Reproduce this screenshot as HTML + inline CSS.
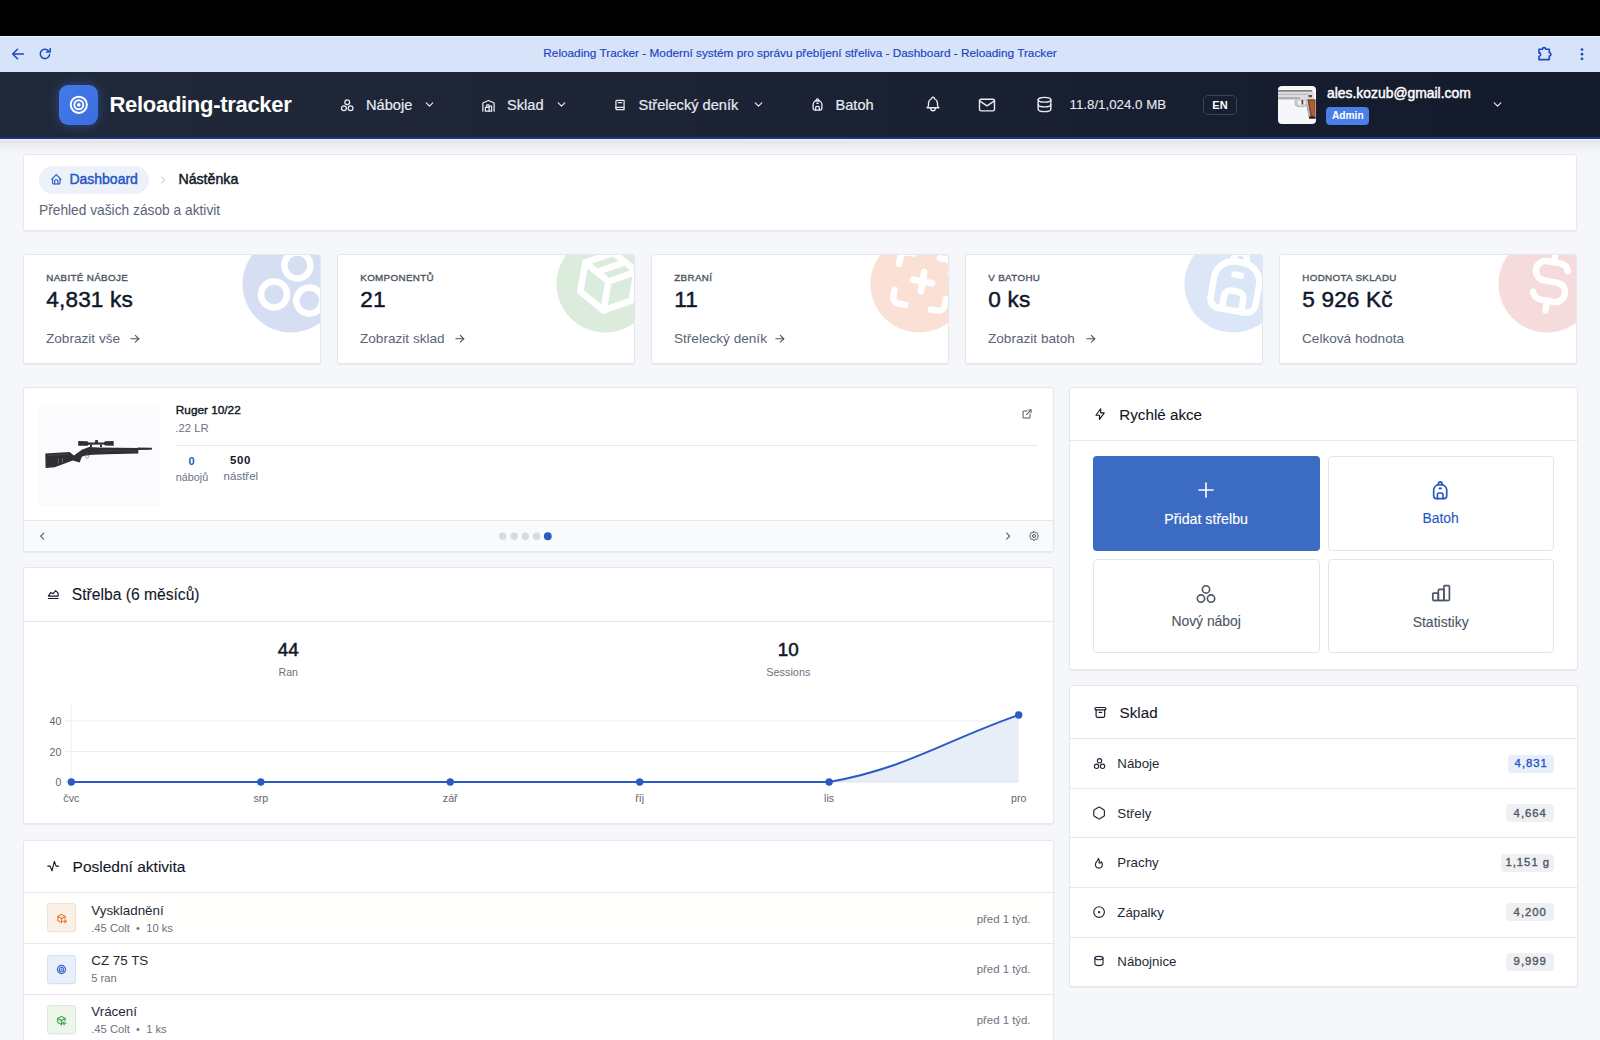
<!DOCTYPE html>
<html><head><meta charset="utf-8">
<style>
*{box-sizing:border-box;margin:0;padding:0}
html,body{width:1600px;height:1040px;overflow:hidden}
body{font-family:"Liberation Sans",sans-serif;background:#f6f7fb;position:relative;color:#111827}
.a{position:absolute}
.t{white-space:nowrap;line-height:1}
.sb{-webkit-text-stroke:0.35px currentColor}
.md{-webkit-text-stroke:0.2px currentColor}
</style></head>
<body>
<div class="a" style="left:0.00px;top:0.00px;width:1600.00px;height:36.00px;background:#000"></div>
<div class="a" style="left:0.00px;top:36.00px;width:1600.00px;height:36.00px;background:#d7e3f8"></div>
<div class="a" style="left:0.00px;top:36.00px;width:1600.00px;height:1.00px;background:#eef3fc"></div>
<div class="a t" style="left:0.00px;top:47.67px;font-size:11.80px;color:#1a42c2;width:1600.00px;text-align:center;-webkit-text-stroke:0.15px #1a42c2;">Reloading Tracker - Moderní systém pro správu přebíjení střeliva - Dashboard - Reloading Tracker</div>
<svg class="a" style="left:11px;top:47px" width="14" height="14" viewBox="0 0 14 14"><path d="M12.5 7H2M6.5 2.2L1.7 7l4.8 4.8" fill="none" stroke="#1c47c6" stroke-width="1.5" stroke-linecap="round" stroke-linejoin="round"/></svg>
<svg class="a" style="left:38px;top:47px" width="14" height="14" viewBox="0 0 14 14"><path d="M11.6 7.6A4.7 4.7 0 1 1 10.3 3.6" fill="none" stroke="#1c47c6" stroke-width="1.5" stroke-linecap="round"/><path d="M12.2 1.5v3.6H8.6" fill="none" stroke="#1c47c6" stroke-width="1.5" stroke-linecap="round" stroke-linejoin="round"/></svg>
<svg class="a" style="left:1537px;top:45px" width="17" height="17" viewBox="0 0 17 17"><path d="M2 4.2h3.5a1.6 1.6 0 0 1 3.2 0h3.6v3.6a1.6 1.6 0 0 1 0 3.2v3.6H2v-3.4a1.6 1.6 0 0 0 0-3.3z" fill="none" stroke="#1c47c6" stroke-width="1.6" stroke-linejoin="round"/></svg>
<svg class="a" style="left:1579px;top:47px" width="6" height="14" viewBox="0 0 6 14"><circle cx="3" cy="2.5" r="1.35" fill="#1c47c6"/><circle cx="3" cy="7.2" r="1.35" fill="#1c47c6"/><circle cx="3" cy="11.8" r="1.35" fill="#1c47c6"/></svg>
<div class="a" style="left:0.00px;top:72.00px;width:1600.00px;height:65.00px;background:linear-gradient(90deg,#202939 0%,#1c2335 45%,#131a2c 100%)"></div>
<div class="a" style="left:0.00px;top:137.00px;width:1600.00px;height:2.00px;background:#1f3577"></div>
<div class="a" style="left:0.00px;top:139.00px;width:1600.00px;height:15.00px;background:linear-gradient(#f4f5f8 0px,#e3e4e9 2px,#eceef2 6px,#f6f7fb 15px)"></div>
<div class="a" style="left:59.00px;top:85.00px;width:39.00px;height:39.50px;border-radius:9px;background:linear-gradient(135deg,#4479ea,#3b6fe0);box-shadow:0 0 12px rgba(70,120,235,.45)"></div>
<svg class="a" style="left:67.95px;top:93.80px" width="21.60" height="21.60" viewBox="0 0 24 24" fill="none" stroke="#fff" stroke-width="2.20" stroke-linecap="round" stroke-linejoin="round"><path d="M12 12m-1 0a1 1 0 1 0 2 0a1 1 0 1 0 -2 0"/><path d="M12 12m-5 0a5 5 0 1 0 10 0a5 5 0 1 0 -10 0"/><path d="M12 12m-9 0a9 9 0 1 0 18 0a9 9 0 1 0 -18 0"/></svg>
<div class="a t" style="left:109.50px;top:94.05px;font-size:22.00px;color:#fff;font-weight:bold;letter-spacing:-0.3px;">Reloading-tracker</div>
<svg class="a" style="left:339.75px;top:97.50px" width="14.50" height="14.50" viewBox="0 0 24 24" fill="none" stroke="#e8ebf2" stroke-width="2.10" stroke-linecap="round" stroke-linejoin="round"><path d="M12 7m-4 0a4 4 0 1 0 8 0a4 4 0 1 0 -8 0"/><path d="M6.5 17m-4 0a4 4 0 1 0 8 0a4 4 0 1 0 -8 0"/><path d="M17.5 17m-4 0a4 4 0 1 0 8 0a4 4 0 1 0 -8 0"/></svg>
<div class="a t" style="left:366.00px;top:97.79px;font-size:14.60px;color:#e8ebf2;-webkit-text-stroke:0.2px #e8ebf2;">Náboje</div>
<svg class="a" style="left:423.30px;top:98.00px" width="13.00" height="13.00" viewBox="0 0 24 24" fill="none" stroke="#e8ebf2" stroke-width="2.20" stroke-linecap="round" stroke-linejoin="round"><path d="M6 9l6 6l6 -6"/></svg>
<svg class="a" style="left:480.75px;top:97.50px" width="15.00" height="15.00" viewBox="0 0 24 24" fill="none" stroke="#e8ebf2" stroke-width="2.00" stroke-linecap="round" stroke-linejoin="round"><path d="M3 21v-13l9 -4l9 4v13"/><path d="M13 13h4v8h-10v-6h6"/><path d="M13 21v-9a1 1 0 0 0 -1 -1h-2a1 1 0 0 0 -1 1v3"/></svg>
<div class="a t" style="left:507.00px;top:97.79px;font-size:14.60px;color:#e8ebf2;-webkit-text-stroke:0.2px #e8ebf2;">Sklad</div>
<svg class="a" style="left:554.80px;top:98.00px" width="13.00" height="13.00" viewBox="0 0 24 24" fill="none" stroke="#e8ebf2" stroke-width="2.20" stroke-linecap="round" stroke-linejoin="round"><path d="M6 9l6 6l6 -6"/></svg>
<svg class="a" style="left:613.00px;top:98.15px" width="14.00" height="14.00" viewBox="0 0 24 24" fill="none" stroke="#e8ebf2" stroke-width="2.10" stroke-linecap="round" stroke-linejoin="round"><path d="M19 4v16h-12a2 2 0 0 1 -2 -2v-12a2 2 0 0 1 2 -2h12z"/><path d="M19 16h-12a2 2 0 0 0 -2 2"/><path d="M9 8h6"/></svg>
<div class="a t" style="left:638.50px;top:97.79px;font-size:14.60px;color:#e8ebf2;-webkit-text-stroke:0.2px #e8ebf2;">Střelecký deník</div>
<svg class="a" style="left:752.00px;top:98.00px" width="13.00" height="13.00" viewBox="0 0 24 24" fill="none" stroke="#e8ebf2" stroke-width="2.20" stroke-linecap="round" stroke-linejoin="round"><path d="M6 9l6 6l6 -6"/></svg>
<svg class="a" style="left:809.70px;top:97.00px" width="15.00" height="15.00" viewBox="0 0 24 24" fill="none" stroke="#e8ebf2" stroke-width="2.10" stroke-linecap="round" stroke-linejoin="round"><path d="M5 18v-6a6 6 0 0 1 6 -6h2a6 6 0 0 1 6 6v6a3 3 0 0 1 -3 3h-8a3 3 0 0 1 -3 -3z"/><path d="M10 6v-1a2 2 0 1 1 4 0v1"/><path d="M9 21v-4a2 2 0 0 1 2 -2h2a2 2 0 0 1 2 2v4"/><path d="M11 10h2"/></svg>
<div class="a t" style="left:835.50px;top:97.79px;font-size:14.60px;color:#e8ebf2;-webkit-text-stroke:0.2px #e8ebf2;">Batoh</div>
<svg class="a" style="left:923.75px;top:95.45px" width="18.00" height="18.00" viewBox="0 0 24 24" fill="none" stroke="#e8ebf2" stroke-width="1.80" stroke-linecap="round" stroke-linejoin="round"><path d="M10 5a2 2 0 1 1 4 0a7 7 0 0 1 4 6v3a4 4 0 0 0 2 3h-16a4 4 0 0 0 2 -3v-3a7 7 0 0 1 4 -6"/><path d="M9 17v1a3 3 0 0 0 6 0v-1"/></svg>
<svg class="a" style="left:976.50px;top:94.50px" width="20.00" height="20.00" viewBox="0 0 24 24" fill="none" stroke="#e8ebf2" stroke-width="1.70" stroke-linecap="round" stroke-linejoin="round"><path d="M3 7a2 2 0 0 1 2 -2h14a2 2 0 0 1 2 2v10a2 2 0 0 1 -2 2h-14a2 2 0 0 1 -2 -2v-10z"/><path d="M3 7l9 6l9 -6"/></svg>
<svg class="a" style="left:1035.00px;top:95.20px" width="19.00" height="19.00" viewBox="0 0 24 24" fill="none" stroke="#e8ebf2" stroke-width="1.80" stroke-linecap="round" stroke-linejoin="round"><path d="M12 6m-8 0a8 3 0 1 0 16 0a8 3 0 1 0 -16 0"/><path d="M4 6v6a8 3 0 0 0 16 0v-6"/><path d="M4 12v6a8 3 0 0 0 16 0v-6"/></svg>
<div class="a t" style="left:1069.50px;top:98.19px;font-size:13.30px;color:#e8ebf2;-webkit-text-stroke:0.1px #e8ebf2;">11.8/1,024.0 MB</div>
<div class="a" style="left:1203.00px;top:94.50px;width:34.00px;height:20.50px;border:1.5px solid #3b4254;border-radius:5px"></div>
<div class="a t" style="left:1203.00px;top:99.55px;font-size:11.00px;color:#fff;font-weight:bold;width:34.00px;text-align:center;">EN</div>
<div class="a" style="left:1278px;top:86px;width:37.5px;height:37.5px;border-radius:4px;background:#f6f7f9;overflow:hidden">
 <svg width="38" height="38" viewBox="0 0 38 38"><path d="M0 5.2h34.5l1.5 1.5v7.3H0z" fill="#dcdcde"/><path d="M0 4.2h34.2v1.3H0z" fill="#5a5a5c"/><path d="M0 7.8h31v1.1H0z" fill="#bdbdc0"/><path d="M0 11.3h22v1.6H0z" fill="#a9a9ac"/><path d="M30.5 9h3.5v2.2h-3.5z" fill="#555"/><path d="M16.5 13.5h13v4.5c-1 2.2-3 3.2-5.2 3.2h-3.3c-2.5 0-4.5-1.2-4.5-3.5z" fill="#c4c4c7"/><path d="M19.5 14.5h8v3c-.8 1.3-2 2-3.5 2h-1.5c-1.8 0-3-.8-3-2.2z" fill="#eeeeef"/><path d="M23.6 14h1.6v4.5h-1.6z" fill="#3d3d40"/><path d="M29.3 13.2L37.5 13.2L37.5 30.6L32.3 31.2z" fill="#8a4824"/><path d="M31.2 15l4.6-.2 1 14.6-2.8.4z" fill="#a9603a"/><path d="M28 18.4l1.9-.3 2.6 12.4-1.9.3z" fill="#a8b2c0"/><path d="M30.6 30.6h7v2.2h-6.3z" fill="#1f1f22"/></svg>
</div>
<div class="a t" style="left:1327.00px;top:87.28px;font-size:13.90px;color:#fff;-webkit-text-stroke:0.45px #fff;">ales.kozub@gmail.com</div>
<div class="a" style="left:1326.30px;top:107.00px;width:43.00px;height:18.00px;border-radius:4px;background:#4a7fe8"></div>
<div class="a t" style="left:1326.30px;top:110.83px;font-size:10.20px;color:#fff;font-weight:bold;width:43.00px;text-align:center;">Admin</div>
<svg class="a" style="left:1490.75px;top:98.20px" width="13.00" height="13.00" viewBox="0 0 24 24" fill="none" stroke="#e8ebf2" stroke-width="2.20" stroke-linecap="round" stroke-linejoin="round"><path d="M6 9l6 6l6 -6"/></svg>
<div class="a" style="left:23.00px;top:154.00px;width:1554.00px;height:77.00px;background:#fff;border:1px solid #e4e7ec;border-radius:3px;box-shadow:0 1px 1.5px rgba(17,24,39,.06);"></div>
<div class="a" style="left:38.50px;top:165.50px;width:110.00px;height:28.20px;border-radius:14px;background:#edf1fa"></div>
<svg class="a" style="left:49.85px;top:173.30px" width="12.60" height="12.60" viewBox="0 0 24 24" fill="none" stroke="#2456c4" stroke-width="2.10" stroke-linecap="round" stroke-linejoin="round"><path d="M5 12l-2 0l9 -9l9 9l-2 0"/><path d="M5 12v7a2 2 0 0 0 2 2h10a2 2 0 0 0 2 -2v-7"/><path d="M9 21v-6a2 2 0 0 1 2 -2h2a2 2 0 0 1 2 2v6"/></svg>
<div class="a t" style="left:69.40px;top:172.10px;font-size:14.00px;color:#2456c4;-webkit-text-stroke:0.45px #2456c4;">Dashboard</div>
<svg class="a" style="left:157.20px;top:173.95px" width="12.30" height="12.30" viewBox="0 0 24 24" fill="none" stroke="#cdd2da" stroke-width="2.20" stroke-linecap="round" stroke-linejoin="round"><path d="M9 6l6 6l-6 6"/></svg>
<div class="a t" style="left:178.40px;top:171.93px;font-size:14.20px;color:#111827;-webkit-text-stroke:0.45px #111827;">Nástěnka</div>
<div class="a t" style="left:39.00px;top:204.01px;font-size:13.75px;color:#5b6475;">Přehled vašich zásob a aktivit</div>
<div class="a" style="left:23px;top:254px;width:298px;height:110px;background:#fff;border:1px solid #e4e7ec;border-radius:3px;box-shadow:0 1px 1.5px rgba(17,24,39,.06);overflow:hidden"><svg class="a" style="left:-1px;top:-1px" width="298" height="108" viewBox="0 0 298 108"><circle cx="268" cy="30" r="48.5" fill="#d5def2"/><g transform="translate(271.5,27.5) rotate(10) scale(3.26) translate(-12,-12)" fill="none" stroke="#fff" stroke-width="2" stroke-linecap="round" stroke-linejoin="round"><path d="M12 7m-4 0a4 4 0 1 0 8 0a4 4 0 1 0 -8 0"/><path d="M6.5 17m-4 0a4 4 0 1 0 8 0a4 4 0 1 0 -8 0"/><path d="M17.5 17m-4 0a4 4 0 1 0 8 0a4 4 0 1 0 -8 0"/></g></svg></div>
<div class="a t" style="left:46.25px;top:272.87px;font-size:9.80px;color:#4b5563;letter-spacing:0.35px;-webkit-text-stroke:0.35px #4b5563;">NABITÉ NÁBOJE</div>
<div class="a t" style="left:46.30px;top:289.39px;font-size:22.60px;color:#0f172a;letter-spacing:0.15px;-webkit-text-stroke:0.45px #0f172a;">4,831 ks</div>
<div class="a t" style="left:46.00px;top:332.19px;font-size:13.60px;color:#5b6476;">Zobrazit vše</div>
<svg class="a" style="left:127.75px;top:331.85px" width="13.50" height="13.50" viewBox="0 0 24 24" fill="none" stroke="#4b5565" stroke-width="1.90" stroke-linecap="round" stroke-linejoin="round"><path d="M5 12l14 0"/><path d="M13 18l6 -6"/><path d="M13 6l6 6"/></svg>
<div class="a" style="left:337px;top:254px;width:298px;height:110px;background:#fff;border:1px solid #e4e7ec;border-radius:3px;box-shadow:0 1px 1.5px rgba(17,24,39,.06);overflow:hidden"><svg class="a" style="left:-1px;top:-1px" width="298" height="108" viewBox="0 0 298 108"><circle cx="268" cy="30" r="48.5" fill="#dcecdc"/><g transform="translate(271.5,27.5) rotate(10) scale(3.26) translate(-12,-12)" fill="none" stroke="#fff" stroke-width="2" stroke-linecap="round" stroke-linejoin="round"><path d="M12 3l8 4.5l0 9l-8 4.5l-8 -4.5l0 -9l8 -4.5"/><path d="M12 12l8 -4.5"/><path d="M12 12l0 9"/><path d="M12 12l-8 -4.5"/><path d="M16 5.25l-8 4.5"/></g></svg></div>
<div class="a t" style="left:360.25px;top:272.87px;font-size:9.80px;color:#4b5563;letter-spacing:0.35px;-webkit-text-stroke:0.35px #4b5563;">KOMPONENTŮ</div>
<div class="a t" style="left:360.30px;top:289.39px;font-size:22.60px;color:#0f172a;letter-spacing:0.15px;-webkit-text-stroke:0.45px #0f172a;">21</div>
<div class="a t" style="left:360.00px;top:332.19px;font-size:13.60px;color:#5b6476;">Zobrazit sklad</div>
<svg class="a" style="left:452.55px;top:331.85px" width="13.50" height="13.50" viewBox="0 0 24 24" fill="none" stroke="#4b5565" stroke-width="1.90" stroke-linecap="round" stroke-linejoin="round"><path d="M5 12l14 0"/><path d="M13 18l6 -6"/><path d="M13 6l6 6"/></svg>
<div class="a" style="left:651px;top:254px;width:298px;height:110px;background:#fff;border:1px solid #e4e7ec;border-radius:3px;box-shadow:0 1px 1.5px rgba(17,24,39,.06);overflow:hidden"><svg class="a" style="left:-1px;top:-1px" width="298" height="108" viewBox="0 0 298 108"><circle cx="268" cy="30" r="48.5" fill="#fae0d5"/><g transform="translate(271.5,27.5) rotate(10) scale(3.26) translate(-12,-12)" fill="none" stroke="#fff" stroke-width="2" stroke-linecap="round" stroke-linejoin="round"><path d="M4 8v-2a2 2 0 0 1 2 -2h2"/><path d="M4 16v2a2 2 0 0 0 2 2h2"/><path d="M16 4h2a2 2 0 0 1 2 2v2"/><path d="M16 20h2a2 2 0 0 0 2 -2v-2"/><path d="M9 12h6"/><path d="M12 9v6"/></g></svg></div>
<div class="a t" style="left:674.25px;top:272.87px;font-size:9.80px;color:#4b5563;letter-spacing:0.35px;-webkit-text-stroke:0.35px #4b5563;">ZBRANÍ</div>
<div class="a t" style="left:674.30px;top:289.39px;font-size:22.60px;color:#0f172a;letter-spacing:0.15px;-webkit-text-stroke:0.45px #0f172a;">11</div>
<div class="a t" style="left:674.00px;top:332.19px;font-size:13.60px;color:#5b6476;">Střelecký deník</div>
<svg class="a" style="left:773.25px;top:331.85px" width="13.50" height="13.50" viewBox="0 0 24 24" fill="none" stroke="#4b5565" stroke-width="1.90" stroke-linecap="round" stroke-linejoin="round"><path d="M5 12l14 0"/><path d="M13 18l6 -6"/><path d="M13 6l6 6"/></svg>
<div class="a" style="left:965px;top:254px;width:298px;height:110px;background:#fff;border:1px solid #e4e7ec;border-radius:3px;box-shadow:0 1px 1.5px rgba(17,24,39,.06);overflow:hidden"><svg class="a" style="left:-1px;top:-1px" width="298" height="108" viewBox="0 0 298 108"><circle cx="268" cy="30" r="48.5" fill="#dbe7f7"/><g transform="translate(271.5,27.5) rotate(10) scale(3.26) translate(-12,-12)" fill="none" stroke="#fff" stroke-width="2" stroke-linecap="round" stroke-linejoin="round"><path d="M5 18v-6a6 6 0 0 1 6 -6h2a6 6 0 0 1 6 6v6a3 3 0 0 1 -3 3h-8a3 3 0 0 1 -3 -3z"/><path d="M10 6v-1a2 2 0 1 1 4 0v1"/><path d="M9 21v-4a2 2 0 0 1 2 -2h2a2 2 0 0 1 2 2v4"/><path d="M11 10h2"/></g></svg></div>
<div class="a t" style="left:988.25px;top:272.87px;font-size:9.80px;color:#4b5563;letter-spacing:0.35px;-webkit-text-stroke:0.35px #4b5563;">V BATOHU</div>
<div class="a t" style="left:988.30px;top:289.39px;font-size:22.60px;color:#0f172a;letter-spacing:0.15px;-webkit-text-stroke:0.45px #0f172a;">0 ks</div>
<div class="a t" style="left:988.00px;top:332.19px;font-size:13.60px;color:#5b6476;">Zobrazit batoh</div>
<svg class="a" style="left:1083.85px;top:331.85px" width="13.50" height="13.50" viewBox="0 0 24 24" fill="none" stroke="#4b5565" stroke-width="1.90" stroke-linecap="round" stroke-linejoin="round"><path d="M5 12l14 0"/><path d="M13 18l6 -6"/><path d="M13 6l6 6"/></svg>
<div class="a" style="left:1279px;top:254px;width:298px;height:110px;background:#fff;border:1px solid #e4e7ec;border-radius:3px;box-shadow:0 1px 1.5px rgba(17,24,39,.06);overflow:hidden"><svg class="a" style="left:-1px;top:-1px" width="298" height="108" viewBox="0 0 298 108"><circle cx="268" cy="30" r="48.5" fill="#f5dbdb"/><g transform="translate(271.5,27.5) rotate(10) scale(3.26) translate(-12,-12)" fill="none" stroke="#fff" stroke-width="2" stroke-linecap="round" stroke-linejoin="round"><path d="M16.7 8a3 3 0 0 0 -2.7 -2h-4a3 3 0 0 0 0 6h4a3 3 0 0 1 0 6h-4a3 3 0 0 1 -2.7 -2"/><path d="M12 3v3m0 12v3"/></g></svg></div>
<div class="a t" style="left:1302.25px;top:272.87px;font-size:9.80px;color:#4b5563;letter-spacing:0.35px;-webkit-text-stroke:0.35px #4b5563;">HODNOTA SKLADU</div>
<div class="a t" style="left:1302.30px;top:289.39px;font-size:22.60px;color:#0f172a;letter-spacing:0.15px;-webkit-text-stroke:0.45px #0f172a;">5 926 Kč</div>
<div class="a t" style="left:1302.00px;top:332.19px;font-size:13.60px;color:#5b6476;">Celková hodnota</div>
<div class="a" style="left:23.00px;top:387.00px;width:1031.00px;height:165.00px;background:#fff;border:1px solid #e4e7ec;border-radius:3px;box-shadow:0 1px 1.5px rgba(17,24,39,.06);"></div>
<div class="a" style="left:38.70px;top:403.80px;width:121.00px;height:102.50px;background:#fbfbfd;border-radius:3px"></div>
<svg class="a" style="left:0;top:0" width="1600" height="1040" viewBox="0 0 1600 1040">
 <g fill="#2f2f33">
  <path d="M45.3 453.4L69.5 451.9L73.9 455.4L81.9 449.8L89.1 446.9L98 447.4L138.2 448.1L138.4 453.4L107 454.2L92.7 454.8L84.5 455.8L81.9 456.8L79.6 462.6L72.8 460.6L54.7 467.2L45.6 468z"/>
  <path d="M137.5 447.5L151.6 447.8Q152.6 448.7 151.6 449.8L137.5 449.9z"/>
  <path d="M78.2 441.1L87.5 441.3L88.5 442.6L95 442.6L95.3 439.9L97.8 439.9L98 442.6L104 442.6L105 441.2L113.6 441.1L113.8 445.8L105 445.6L104 444.6L88.5 444.7L87.5 445.8L78.2 445.8z"/>
  <path d="M90 444.5h2v2.6h-2zM100 444.5h2v2.6h-2z"/>
 </g>
 <path d="M48 455.5L68 454.2" stroke="#4a4a4f" stroke-width="0.8"/>
 <path d="M100 450.5L136 451" stroke="#46464b" stroke-width="0.7"/>
 <circle cx="87.2" cy="456.6" r="1.6" fill="none" stroke="#8a8a8f" stroke-width="0.8"/>
 <path d="M58.4 458.5v5M62.5 458v5" stroke="#6a6a70" stroke-width="0.9"/>
</svg>
<div class="a t" style="left:175.80px;top:405.17px;font-size:11.80px;color:#111827;-webkit-text-stroke:0.4px #111827;">Ruger 10/22</div>
<div class="a t" style="left:175.30px;top:423.00px;font-size:11.30px;color:#6b7280;">.22 LR</div>
<div class="a" style="left:175.00px;top:444.50px;width:863.00px;height:1.50px;background:#e6e8ec"></div>
<div class="a t" style="left:175.00px;top:455.75px;font-size:11.00px;color:#2456c4;font-weight:bold;width:33.00px;text-align:center;">0</div>
<div class="a t" style="left:223.50px;top:455.41px;font-size:11.40px;color:#111827;font-weight:bold;width:34.00px;text-align:center;letter-spacing:0.6px;">500</div>
<div class="a t" style="left:175.80px;top:471.52px;font-size:10.80px;color:#6b7280;">nábojů</div>
<div class="a t" style="left:223.60px;top:470.93px;font-size:11.50px;color:#6b7280;">nástřel</div>
<svg class="a" style="left:1020.95px;top:407.95px" width="12.10" height="12.10" viewBox="0 0 24 24" fill="none" stroke="#4b5563" stroke-width="2.00" stroke-linecap="round" stroke-linejoin="round"><path d="M12 6h-6a2 2 0 0 0 -2 2v10a2 2 0 0 0 2 2h10a2 2 0 0 0 2 -2v-6"/><path d="M11 13l9 -9"/><path d="M15 4h5v5"/></svg>
<div class="a" style="left:24.00px;top:520.00px;width:1029.00px;height:31.00px;background:#f9fafb;border-top:1px solid #e5e7eb"></div>
<svg class="a" style="left:35.85px;top:530.45px" width="12.30" height="12.30" viewBox="0 0 24 24" fill="none" stroke="#4b5563" stroke-width="2.00" stroke-linecap="round" stroke-linejoin="round"><path d="M15 6l-6 6l6 6"/></svg>
<svg class="a" style="left:495px;top:530px" width="60" height="12" viewBox="0 0 60 12"><circle cx="7.8" cy="6.25" r="3.7" fill="#d8dadf"/><circle cx="19.25" cy="6.25" r="3.7" fill="#d8dadf"/><circle cx="30.3" cy="6.25" r="3.7" fill="#d8dadf"/><circle cx="41.6" cy="6.25" r="3.7" fill="#d8dadf"/><circle cx="52.8" cy="6.25" r="3.9" fill="#2a5bc4"/></svg>
<svg class="a" style="left:1002.35px;top:530.45px" width="12.30" height="12.30" viewBox="0 0 24 24" fill="none" stroke="#4b5563" stroke-width="2.00" stroke-linecap="round" stroke-linejoin="round"><path d="M9 6l6 6l-6 6"/></svg>
<svg class="a" style="left:1028.45px;top:530.40px" width="12.00" height="12.00" viewBox="0 0 24 24" fill="none" stroke="#4b5563" stroke-width="2.00" stroke-linecap="round" stroke-linejoin="round"><path d="M10.325 4.317c.426 -1.756 2.924 -1.756 3.35 0a1.724 1.724 0 0 0 2.573 1.066c1.543 -.94 3.31 .826 2.37 2.37a1.724 1.724 0 0 0 1.065 2.572c1.756 .426 1.756 2.924 0 3.35a1.724 1.724 0 0 0 -1.066 2.573c.94 1.543 -.826 3.31 -2.37 2.37a1.724 1.724 0 0 0 -2.572 1.065c-.426 1.756 -2.924 1.756 -3.35 0a1.724 1.724 0 0 0 -2.573 -1.066c-1.543 .94 -3.31 -.826 -2.37 -2.37a1.724 1.724 0 0 0 -1.065 -2.572c-1.756 -.426 -1.756 -2.924 0 -3.35a1.724 1.724 0 0 0 1.066 -2.573c-.94 -1.543 .826 -3.31 2.37 -2.37c1 .608 2.296 .07 2.572 -1.065z"/><path d="M9 12a3 3 0 1 0 6 0a3 3 0 0 0 -6 0"/></svg>
<div class="a" style="left:23.00px;top:567.00px;width:1031.00px;height:257.00px;background:#fff;border:1px solid #e4e7ec;border-radius:3px;box-shadow:0 1px 1.5px rgba(17,24,39,.06);"></div>
<svg class="a" style="left:46.30px;top:587.25px" width="14.50" height="14.50" viewBox="0 0 24 24" fill="none" stroke="#111827" stroke-width="1.90" stroke-linecap="round" stroke-linejoin="round"><path d="M4 19l16 0"/><path d="M4 15l4 -6l4 2l4 -5l4 4l0 5l-16 0"/></svg>
<div class="a t" style="left:71.80px;top:586.70px;font-size:15.65px;color:#111827;-webkit-text-stroke:0.1px #111827;">Střelba (6 měsíců)</div>
<div class="a" style="left:24.00px;top:621.00px;width:1029.00px;height:1.00px;background:#e5e7eb"></div>
<div class="a t" style="left:188.30px;top:641.02px;font-size:18.80px;color:#111827;width:200.00px;text-align:center;-webkit-text-stroke:0.55px #111827;">44</div>
<div class="a t" style="left:188.30px;top:667.39px;font-size:10.60px;color:#6b7280;width:200.00px;text-align:center;">Ran</div>
<div class="a t" style="left:688.30px;top:641.02px;font-size:18.80px;color:#111827;width:200.00px;text-align:center;-webkit-text-stroke:0.55px #111827;">10</div>
<div class="a t" style="left:688.30px;top:667.13px;font-size:10.90px;color:#6b7280;width:200.00px;text-align:center;">Sessions</div>
<svg class="a" style="left:0;top:0" width="1600" height="1040" viewBox="0 0 1600 1040">
 <g stroke="#eceef1" stroke-width="1"><path d="M65 720.8H1018.5M65 751.5H1018.5"/><path d="M71.3 704.5V782"/></g>
 <path d="M829 782C907.1 768.1 942.7 741.5 1018.7 715L1018.7 782z" fill="#e8eef8"/>
 <path d="M65 782H1018.5" stroke="#e0e3e8" stroke-width="1"/>
 <path d="M71.3 782H829C907.1 768.1 942.7 741.5 1018.7 715" fill="none" stroke="#2a5bc4" stroke-width="2"/>
 <g fill="#2a5bc4"><circle cx="71.3" cy="782" r="3.7"/><circle cx="260.8" cy="782" r="3.7"/><circle cx="450.2" cy="782" r="3.7"/><circle cx="639.7" cy="782" r="3.7"/><circle cx="829.1" cy="782" r="3.7"/><circle cx="1018.7" cy="715" r="3.7"/></g>
 <g font-family="Liberation Sans" font-size="10.6" fill="#666" text-anchor="end"><text x="61.3" y="724.9">40</text><text x="61.3" y="755.6">20</text><text x="61.3" y="785.5">0</text></g>
 <g font-family="Liberation Sans" font-size="10.6" fill="#666" text-anchor="middle"><text x="71.3" y="802">čvc</text><text x="260.8" y="802">srp</text><text x="450.2" y="802">zář</text><text x="639.7" y="802">říj</text><text x="829.1" y="802">lis</text><text x="1018.7" y="802">pro</text></g>
</svg>
<div class="a" style="left:23.00px;top:840.00px;width:1031.00px;height:221.00px;background:#fff;border:1px solid #e4e7ec;border-radius:3px;box-shadow:0 1px 1.5px rgba(17,24,39,.06);"></div>
<svg class="a" style="left:46.30px;top:858.75px" width="14.30" height="14.30" viewBox="0 0 24 24" fill="none" stroke="#111827" stroke-width="1.90" stroke-linecap="round" stroke-linejoin="round"><path d="M3 12h4l3 8l4 -16l3 8h4"/></svg>
<div class="a t" style="left:72.60px;top:858.73px;font-size:15.50px;color:#111827;-webkit-text-stroke:0.1px #111827;">Poslední aktivita</div>
<div class="a" style="left:24.00px;top:892.00px;width:1029.00px;height:1.00px;background:#e5e7eb"></div>
<div class="a" style="left:24.00px;top:893.00px;width:1029.00px;height:50.00px;background:#fffffd"></div>
<div class="a" style="left:24.00px;top:943.00px;width:1029.00px;height:1.00px;background:#e5e7eb"></div>
<div class="a" style="left:24.00px;top:994.00px;width:1029.00px;height:1.00px;background:#e5e7eb"></div>
<div class="a" style="left:46.50px;top:903.40px;width:29.00px;height:29.00px;border-radius:3px;background:#fcf1e7;border:1px solid #f1e1d1;box-shadow:0 1px 1px rgba(0,0,0,.04)"></div>
<svg class="a" style="left:55.50px;top:913.30px" width="11.00" height="11.00" viewBox="0 0 24 24" fill="none" stroke="#e8742a" stroke-width="2.40" stroke-linecap="round" stroke-linejoin="round"><path d="M12 21l-8 -4.5v-9l8 -4.5l8 4.5v4.5"/><path d="M12 12l8 -4.5"/><path d="M12 12v9"/><path d="M12 12l-8 -4.5"/><path d="M15 18h7"/><path d="M19 15l3 3l-3 3"/></svg>
<div class="a t" style="left:91.25px;top:903.61px;font-size:13.40px;color:#1f2937;">Vyskladnění</div>
<div class="a t" style="left:91.25px;top:922.88px;font-size:11.20px;color:#6b7280;">.45 Colt&nbsp; •&nbsp; 10 ks</div>
<div class="a t" style="left:880.50px;top:913.61px;font-size:11.40px;color:#6b7280;width:150.00px;text-align:right;">před 1 týd.</div>
<div class="a" style="left:46.50px;top:954.50px;width:29.00px;height:29.00px;border-radius:3px;background:#e9f0fb;border:1px solid #d6e0f0;box-shadow:0 1px 1px rgba(0,0,0,.04)"></div>
<svg class="a" style="left:55.50px;top:964.40px" width="11.00" height="11.00" viewBox="0 0 24 24" fill="none" stroke="#3a66c4" stroke-width="2.40" stroke-linecap="round" stroke-linejoin="round"><path d="M12 12m-1 0a1 1 0 1 0 2 0a1 1 0 1 0 -2 0"/><path d="M12 12m-5 0a5 5 0 1 0 10 0a5 5 0 1 0 -10 0"/><path d="M12 12m-9 0a9 9 0 1 0 18 0a9 9 0 1 0 -18 0"/></svg>
<div class="a t" style="left:91.25px;top:954.21px;font-size:13.40px;color:#1f2937;">CZ 75 TS</div>
<div class="a t" style="left:91.25px;top:973.48px;font-size:11.20px;color:#6b7280;">5 ran</div>
<div class="a t" style="left:880.50px;top:964.21px;font-size:11.40px;color:#6b7280;width:150.00px;text-align:right;">před 1 týd.</div>
<div class="a" style="left:46.50px;top:1005.00px;width:29.00px;height:29.00px;border-radius:3px;background:#edf7ec;border:1px solid #d9eAd6;box-shadow:0 1px 1px rgba(0,0,0,.04)"></div>
<svg class="a" style="left:55.50px;top:1014.90px" width="11.00" height="11.00" viewBox="0 0 24 24" fill="none" stroke="#3aa241" stroke-width="2.40" stroke-linecap="round" stroke-linejoin="round"><path d="M12 21l-8 -4.5v-9l8 -4.5l8 4.5v4.5"/><path d="M12 12l8 -4.5"/><path d="M12 12v9"/><path d="M12 12l-8 -4.5"/><path d="M22 18h-7"/><path d="M18 15l-3 3l3 3"/></svg>
<div class="a t" style="left:91.25px;top:1004.86px;font-size:13.40px;color:#1f2937;">Vrácení</div>
<div class="a t" style="left:91.25px;top:1023.98px;font-size:11.20px;color:#6b7280;">.45 Colt&nbsp; •&nbsp; 1 ks</div>
<div class="a t" style="left:880.50px;top:1014.86px;font-size:11.40px;color:#6b7280;width:150.00px;text-align:right;">před 1 týd.</div>
<div class="a" style="left:1069.00px;top:387.00px;width:509.00px;height:283.00px;background:#fff;border:1px solid #e4e7ec;border-radius:3px;box-shadow:0 1px 1.5px rgba(17,24,39,.06);"></div>
<svg class="a" style="left:1093.15px;top:406.60px" width="14.20" height="14.20" viewBox="0 0 24 24" fill="none" stroke="#111827" stroke-width="1.90" stroke-linecap="round" stroke-linejoin="round"><path d="M13 3l0 7l6 0l-8 11l0 -7l-6 0l8 -11"/></svg>
<div class="a t" style="left:1119.30px;top:406.68px;font-size:15.20px;color:#111827;-webkit-text-stroke:0.1px #111827;">Rychlé akce</div>
<div class="a" style="left:1070.00px;top:440.00px;width:507.00px;height:1.00px;background:#e5e7eb"></div>
<div class="a" style="left:1092.50px;top:456.00px;width:227.30px;height:95.20px;border-radius:4px;background:#3b6bc2"></div>
<svg class="a" style="left:1194.30px;top:478.30px" width="24.00" height="24.00" viewBox="0 0 24 24" fill="none" stroke="#fff" stroke-width="1.60" stroke-linecap="round" stroke-linejoin="round"><path d="M12 5l0 14"/><path d="M5 12l14 0"/></svg>
<div class="a t" style="left:1092.50px;top:511.93px;font-size:14.20px;color:#fff;width:227.30px;text-align:center;-webkit-text-stroke:0.15px #fff;">Přidat střelbu</div>
<div class="a" style="left:1327.50px;top:456.30px;width:226.30px;height:94.40px;border-radius:4px;border:1px solid #e3e5ea;background:#fff"></div>
<svg class="a" style="left:1429.30px;top:479.30px" width="22.40" height="22.40" viewBox="0 0 24 24" fill="none" stroke="#2456c4" stroke-width="1.80" stroke-linecap="round" stroke-linejoin="round"><path d="M5 18v-6a6 6 0 0 1 6 -6h2a6 6 0 0 1 6 6v6a3 3 0 0 1 -3 3h-8a3 3 0 0 1 -3 -3z"/><path d="M10 6v-1a2 2 0 1 1 4 0v1"/><path d="M9 21v-4a2 2 0 0 1 2 -2h2a2 2 0 0 1 2 2v4"/><path d="M11 10h2"/></svg>
<div class="a t" style="left:1327.50px;top:512.18px;font-size:13.90px;color:#2456c4;width:226.30px;text-align:center;-webkit-text-stroke:0.1px #2456c4;">Batoh</div>
<div class="a" style="left:1092.50px;top:559.10px;width:227.30px;height:94.20px;border-radius:4px;border:1px solid #e3e5ea;background:#fff"></div>
<svg class="a" style="left:1195.30px;top:582.50px" width="22.00" height="22.00" viewBox="0 0 24 24" fill="none" stroke="#4b5563" stroke-width="1.80" stroke-linecap="round" stroke-linejoin="round"><path d="M12 7m-4 0a4 4 0 1 0 8 0a4 4 0 1 0 -8 0"/><path d="M6.5 17m-4 0a4 4 0 1 0 8 0a4 4 0 1 0 -8 0"/><path d="M17.5 17m-4 0a4 4 0 1 0 8 0a4 4 0 1 0 -8 0"/></svg>
<div class="a t" style="left:1092.50px;top:615.18px;font-size:13.90px;color:#4b5563;width:227.30px;text-align:center;-webkit-text-stroke:0.1px #4b5563;">Nový náboj</div>
<div class="a" style="left:1327.50px;top:559.10px;width:226.30px;height:94.20px;border-radius:4px;border:1px solid #e3e5ea;background:#fff"></div>
<svg class="a" style="left:1429.55px;top:582.05px" width="22.20" height="22.20" viewBox="0 0 24 24" fill="none" stroke="#4b5563" stroke-width="1.80" stroke-linecap="round" stroke-linejoin="round"><path d="M3 13a1 1 0 0 1 1 -1h4a1 1 0 0 1 1 1v6a1 1 0 0 1 -1 1h-4a1 1 0 0 1 -1 -1z"/><path d="M9 9a1 1 0 0 1 1 -1h4a1 1 0 0 1 1 1v10a1 1 0 0 1 -1 1h-4a1 1 0 0 1 -1 -1z"/><path d="M15 5a1 1 0 0 1 1 -1h4a1 1 0 0 1 1 1v14a1 1 0 0 1 -1 1h-4a1 1 0 0 1 -1 -1z"/><path d="M4 20h14"/></svg>
<div class="a t" style="left:1327.50px;top:615.10px;font-size:14.00px;color:#4b5563;width:226.30px;text-align:center;-webkit-text-stroke:0.1px #4b5563;">Statistiky</div>
<div class="a" style="left:1069.00px;top:685.00px;width:509.00px;height:302.00px;background:#fff;border:1px solid #e4e7ec;border-radius:3px;box-shadow:0 1px 1.5px rgba(17,24,39,.06);"></div>
<svg class="a" style="left:1092.60px;top:704.60px" width="14.80" height="14.80" viewBox="0 0 24 24" fill="none" stroke="#111827" stroke-width="1.90" stroke-linecap="round" stroke-linejoin="round"><path d="M3 4m0 2a2 2 0 0 1 2 -2h14a2 2 0 0 1 2 2v0a2 2 0 0 1 -2 2h-14a2 2 0 0 1 -2 -2z"/><path d="M5 8v10a2 2 0 0 0 2 2h10a2 2 0 0 0 2 -2v-10"/><path d="M10 12l4 0"/></svg>
<div class="a t" style="left:1119.60px;top:704.78px;font-size:15.20px;color:#111827;-webkit-text-stroke:0.1px #111827;">Sklad</div>
<div class="a" style="left:1070.00px;top:738.00px;width:507.00px;height:1.00px;background:#e5e7eb"></div>
<svg class="a" style="left:1092.70px;top:756.80px" width="13.10" height="13.10" viewBox="0 0 24 24" fill="none" stroke="#1f2937" stroke-width="2.00" stroke-linecap="round" stroke-linejoin="round"><path d="M12 7m-4 0a4 4 0 1 0 8 0a4 4 0 1 0 -8 0"/><path d="M6.5 17m-4 0a4 4 0 1 0 8 0a4 4 0 1 0 -8 0"/><path d="M17.5 17m-4 0a4 4 0 1 0 8 0a4 4 0 1 0 -8 0"/></svg>
<div class="a t" style="left:1117.30px;top:757.20px;font-size:13.30px;color:#1f2937;">Náboje</div>
<div class="a" style="left:1507.75px;top:754.50px;width:46.00px;height:18.00px;border-radius:4px;background:#e8eefa"></div>
<div class="a t" style="left:1508.25px;top:758.39px;font-size:11.30px;color:#2456c4;width:46.00px;text-align:center;letter-spacing:1.0px;-webkit-text-stroke:0.35px currentColor;">4,831</div>
<div class="a" style="left:1070.00px;top:788.00px;width:507.00px;height:1.00px;background:#e5e7eb"></div>
<svg class="a" style="left:1091.50px;top:805.70px" width="14.20" height="14.20" viewBox="0 0 24 24" fill="none" stroke="#1f2937" stroke-width="2.00" stroke-linecap="round" stroke-linejoin="round"><path d="M19.875 6.27c.7 .398 1.13 1.143 1.125 1.948v7.284c0 .809 -.443 1.555 -1.158 1.948l-6.75 4.27a2.269 2.269 0 0 1 -2.184 0l-6.75 -4.27a2.225 2.225 0 0 1 -1.158 -1.948v-7.285c0 -.809 .443 -1.554 1.158 -1.947l6.75 -3.98a2.33 2.33 0 0 1 2.25 0l6.75 3.98h-.033z"/></svg>
<div class="a t" style="left:1117.30px;top:806.70px;font-size:13.30px;color:#1f2937;">Střely</div>
<div class="a" style="left:1505.75px;top:804.00px;width:48.00px;height:18.00px;border-radius:4px;background:#eff0f2"></div>
<div class="a t" style="left:1506.25px;top:807.89px;font-size:11.30px;color:#4b5563;width:48.00px;text-align:center;letter-spacing:1.0px;-webkit-text-stroke:0.35px currentColor;">4,664</div>
<div class="a" style="left:1070.00px;top:837.00px;width:507.00px;height:1.00px;background:#e5e7eb"></div>
<svg class="a" style="left:1092.10px;top:855.60px" width="13.80" height="13.80" viewBox="0 0 24 24" fill="none" stroke="#1f2937" stroke-width="2.00" stroke-linecap="round" stroke-linejoin="round"><path d="M12 12c2 -2.96 0 -7 -1 -8c0 3.038 -1.773 4.741 -3 6c-1.226 1.26 -2 3.24 -2 5a6 6 0 1 0 12 0c0 -1.532 -1.056 -3.94 -2 -5c-1.786 3 -2.791 3 -4 2z"/></svg>
<div class="a t" style="left:1117.30px;top:856.20px;font-size:13.30px;color:#1f2937;">Prachy</div>
<div class="a" style="left:1500.75px;top:853.50px;width:53.00px;height:18.00px;border-radius:4px;background:#eff0f2"></div>
<div class="a t" style="left:1501.25px;top:857.39px;font-size:11.30px;color:#4b5563;width:53.00px;text-align:center;letter-spacing:1.0px;-webkit-text-stroke:0.35px currentColor;">1,151 g</div>
<div class="a" style="left:1070.00px;top:887.00px;width:507.00px;height:1.00px;background:#e5e7eb"></div>
<svg class="a" style="left:1091.50px;top:904.90px" width="14.20" height="14.20" viewBox="0 0 24 24" fill="none" stroke="#1f2937" stroke-width="2.00" stroke-linecap="round" stroke-linejoin="round"><path d="M12 12m-1 0a1 1 0 1 0 2 0a1 1 0 1 0 -2 0"/><path d="M12 12m-9 0a9 9 0 1 0 18 0a9 9 0 1 0 -18 0"/></svg>
<div class="a t" style="left:1117.30px;top:905.70px;font-size:13.30px;color:#1f2937;">Zápalky</div>
<div class="a" style="left:1505.75px;top:903.00px;width:48.00px;height:18.00px;border-radius:4px;background:#eff0f2"></div>
<div class="a t" style="left:1506.25px;top:906.89px;font-size:11.30px;color:#4b5563;width:48.00px;text-align:center;letter-spacing:1.0px;-webkit-text-stroke:0.35px currentColor;">4,200</div>
<div class="a" style="left:1070.00px;top:937.00px;width:507.00px;height:1.00px;background:#e5e7eb"></div>
<svg class="a" style="left:1092.25px;top:954.25px" width="13.90" height="13.90" viewBox="0 0 24 24" fill="none" stroke="#1f2937" stroke-width="2.00" stroke-linecap="round" stroke-linejoin="round"><path d="M5 7c0 -1.66 3.13 -3 7 -3s7 1.34 7 3v10c0 1.66 -3.13 3 -7 3s-7 -1.34 -7 -3z"/><path d="M5 7c0 1.66 3.13 3 7 3s7 -1.34 7 -3"/></svg>
<div class="a t" style="left:1117.30px;top:955.20px;font-size:13.30px;color:#1f2937;">Nábojnice</div>
<div class="a" style="left:1505.75px;top:952.50px;width:48.00px;height:18.00px;border-radius:4px;background:#eff0f2"></div>
<div class="a t" style="left:1506.25px;top:956.39px;font-size:11.30px;color:#4b5563;width:48.00px;text-align:center;letter-spacing:1.0px;-webkit-text-stroke:0.35px currentColor;">9,999</div>
</body></html>
